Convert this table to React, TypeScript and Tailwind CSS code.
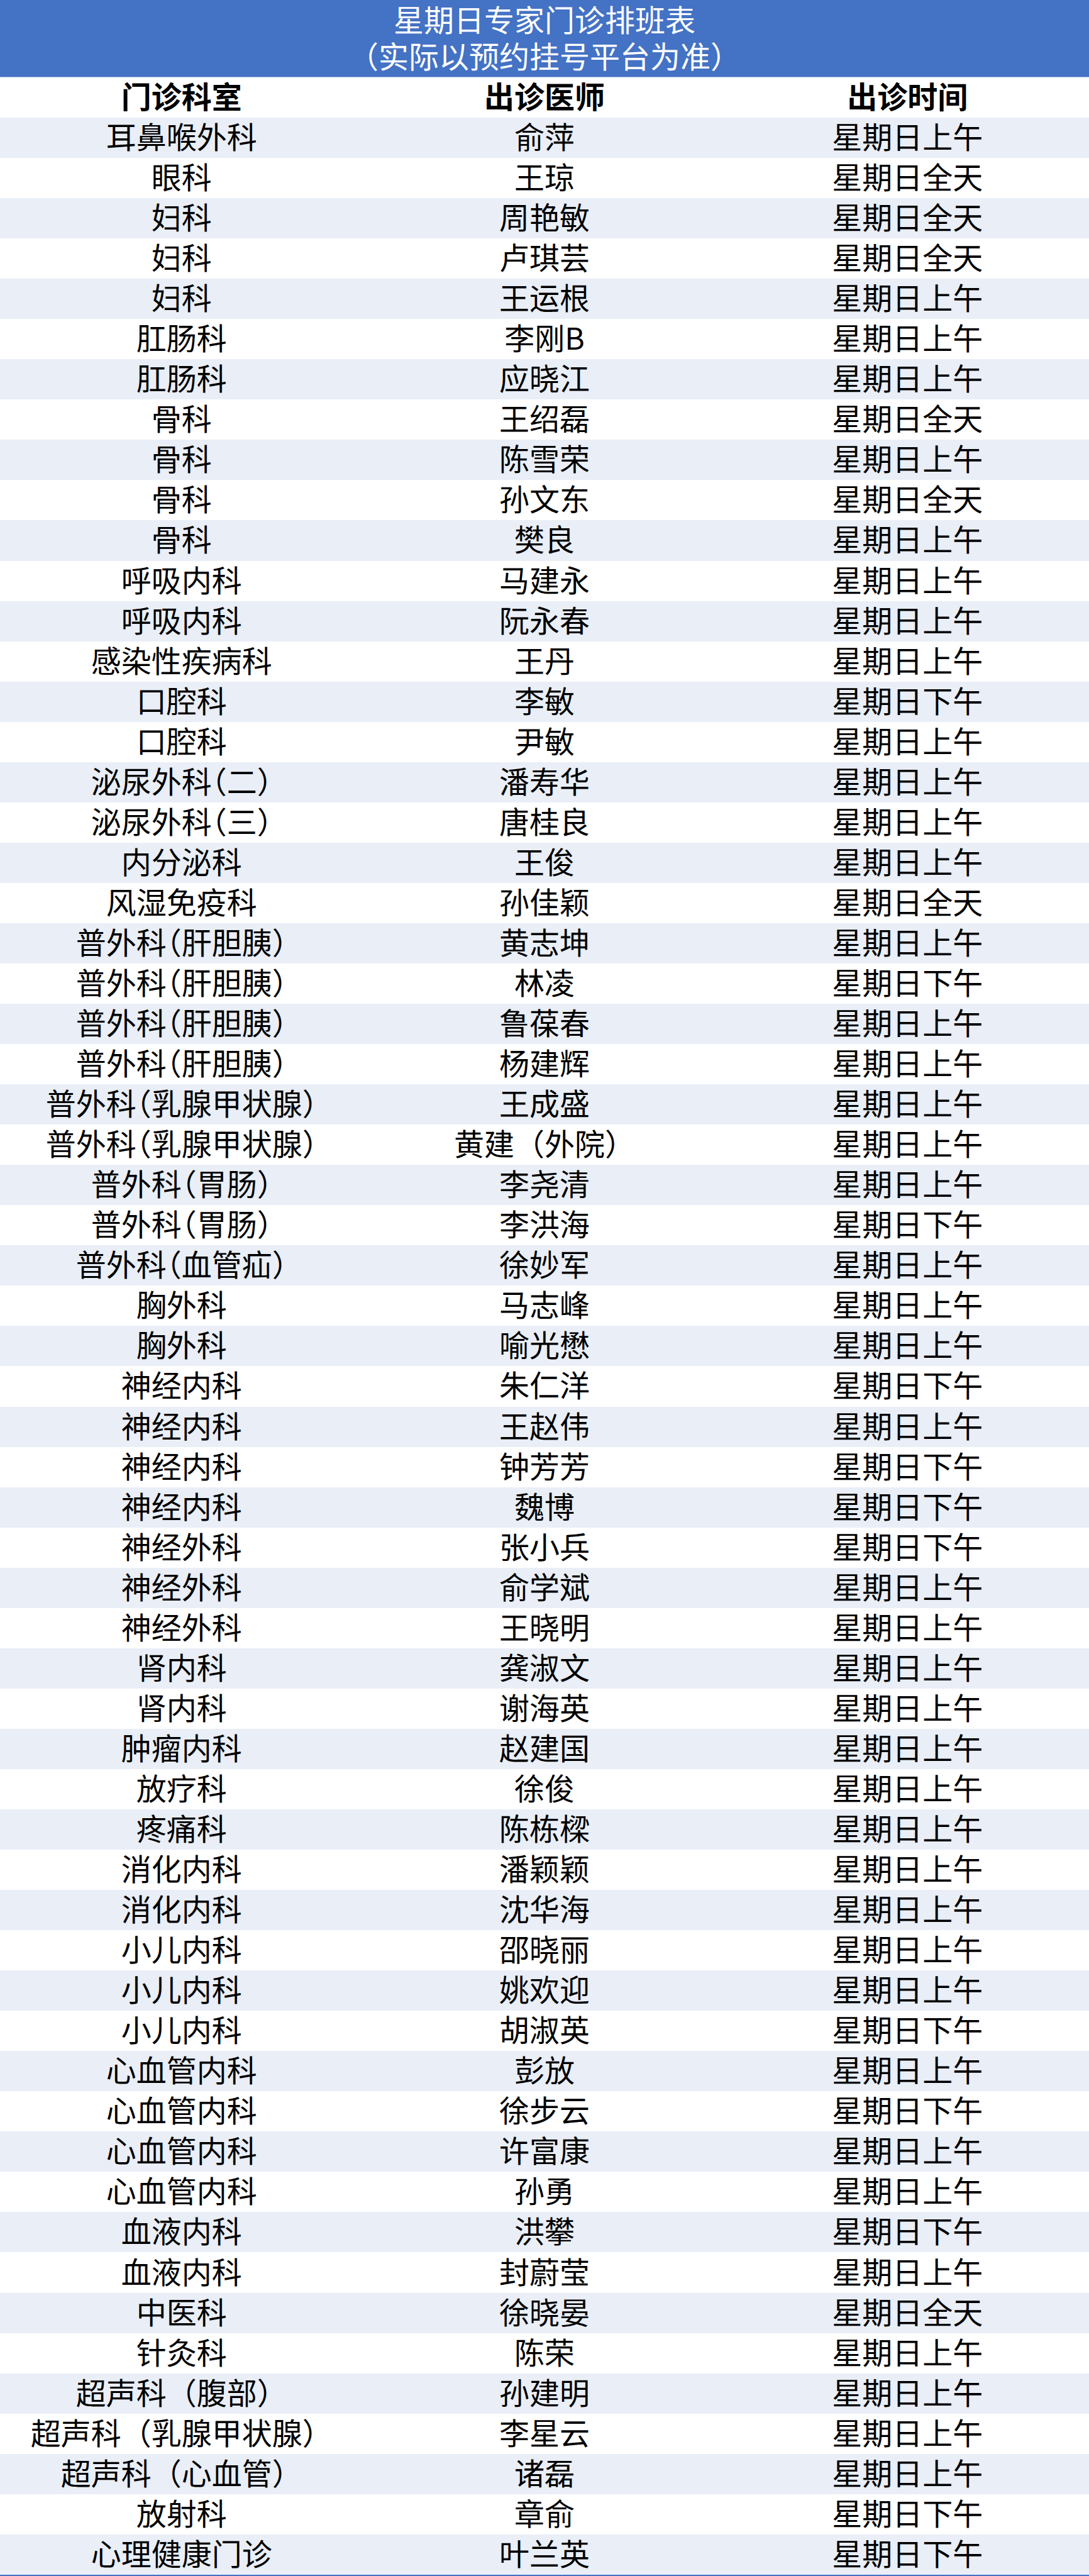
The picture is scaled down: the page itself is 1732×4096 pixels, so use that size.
import React from "react";

type Row = [string, string, string, boolean?];

const rows: Row[] = [
  ["耳鼻喉外科", "俞萍", "星期日上午"],
  ["眼科", "王琼", "星期日全天"],
  ["妇科", "周艳敏", "星期日全天"],
  ["妇科", "卢琪芸", "星期日全天"],
  ["妇科", "王运根", "星期日上午"],
  ["肛肠科", "李刚B", "星期日上午"],
  ["肛肠科", "应晓江", "星期日上午"],
  ["骨科", "王绍磊", "星期日全天"],
  ["骨科", "陈雪荣", "星期日上午"],
  ["骨科", "孙文东", "星期日全天"],
  ["骨科", "樊良", "星期日上午"],
  ["呼吸内科", "马建永", "星期日上午"],
  ["呼吸内科", "阮永春", "星期日上午"],
  ["感染性疾病科", "王丹", "星期日上午"],
  ["口腔科", "李敏", "星期日下午"],
  ["口腔科", "尹敏", "星期日上午"],
  ["泌尿外科（二）", "潘寿华", "星期日上午", true],
  ["泌尿外科（三）", "唐桂良", "星期日上午", true],
  ["内分泌科", "王俊", "星期日上午"],
  ["风湿免疫科", "孙佳颖", "星期日全天"],
  ["普外科（肝胆胰）", "黄志坤", "星期日上午", true],
  ["普外科（肝胆胰）", "林凌", "星期日下午", true],
  ["普外科（肝胆胰）", "鲁葆春", "星期日上午", true],
  ["普外科（肝胆胰）", "杨建辉", "星期日上午", true],
  ["普外科（乳腺甲状腺）", "王成盛", "星期日上午", true],
  ["普外科（乳腺甲状腺）", "黄建（外院）", "星期日上午", true],
  ["普外科（胃肠）", "李尧清", "星期日上午", true],
  ["普外科（胃肠）", "李洪海", "星期日下午", true],
  ["普外科（血管疝）", "徐妙军", "星期日上午", true],
  ["胸外科", "马志峰", "星期日上午"],
  ["胸外科", "喻光懋", "星期日上午"],
  ["神经内科", "朱仁洋", "星期日下午"],
  ["神经内科", "王赵伟", "星期日上午"],
  ["神经内科", "钟芳芳", "星期日下午"],
  ["神经内科", "魏博", "星期日下午"],
  ["神经外科", "张小兵", "星期日下午"],
  ["神经外科", "俞学斌", "星期日上午"],
  ["神经外科", "王晓明", "星期日上午"],
  ["肾内科", "龚淑文", "星期日上午"],
  ["肾内科", "谢海英", "星期日上午"],
  ["肿瘤内科", "赵建国", "星期日上午"],
  ["放疗科", "徐俊", "星期日上午"],
  ["疼痛科", "陈栋樑", "星期日上午"],
  ["消化内科", "潘颖颖", "星期日上午"],
  ["消化内科", "沈华海", "星期日上午"],
  ["小儿内科", "邵晓丽", "星期日上午"],
  ["小儿内科", "姚欢迎", "星期日上午"],
  ["小儿内科", "胡淑英", "星期日下午"],
  ["心血管内科", "彭放", "星期日上午"],
  ["心血管内科", "徐步云", "星期日下午"],
  ["心血管内科", "许富康", "星期日上午"],
  ["心血管内科", "孙勇", "星期日上午"],
  ["血液内科", "洪攀", "星期日下午"],
  ["血液内科", "封蔚莹", "星期日上午"],
  ["中医科", "徐晓晏", "星期日全天"],
  ["针灸科", "陈荣", "星期日上午"],
  ["超声科（腹部）", "孙建明", "星期日上午"],
  ["超声科（乳腺甲状腺）", "李星云", "星期日上午"],
  ["超声科（心血管）", "诸磊", "星期日上午"],
  ["放射科", "章俞", "星期日下午"],
  ["心理健康门诊", "叶兰英", "星期日下午"],
];

const cell = "flex items-center justify-center pb-[8px] whitespace-nowrap";

export default function App() {
  return (
    <div
      className="w-[1732px] bg-white text-black"
      style={{ fontFamily: '"Noto Sans CJK SC", "Noto Sans", sans-serif' }}
    >
      <div className="h-[122px] bg-[#4472C4] flex flex-col items-center justify-center pb-[6px] text-white text-[48px] leading-[58px]">
        <div>星期日专家门诊排班表</div>
        <div>（实际以预约挂号平台为准）</div>
      </div>
      <div className="h-px bg-[#9BB3DF]" />
      <div className="grid grid-cols-3 h-[64px] text-[48px] leading-none font-bold bg-white">
        <div className={cell}>门诊科室</div>
        <div className={cell}>出诊医师</div>
        <div className={cell}>出诊时间</div>
      </div>
      {rows.map((r, i) => (
        <div
          key={i}
          className={
            "grid grid-cols-3 h-[64.05px] text-[48px] leading-none " +
            (i % 2 === 0 ? "bg-[#E9EEF7]" : "bg-white")
          }
        >
          <div
            className={cell + (r[3] ? " [font-feature-settings:'halt']" : "")}
          >
            {r[0]}
          </div>
          <div className={cell}>{r[1]}</div>
          <div className={cell}>{r[2]}</div>
        </div>
      ))}
      <div className="h-[2px] bg-[#4472C4]" />
    </div>
  );
}
